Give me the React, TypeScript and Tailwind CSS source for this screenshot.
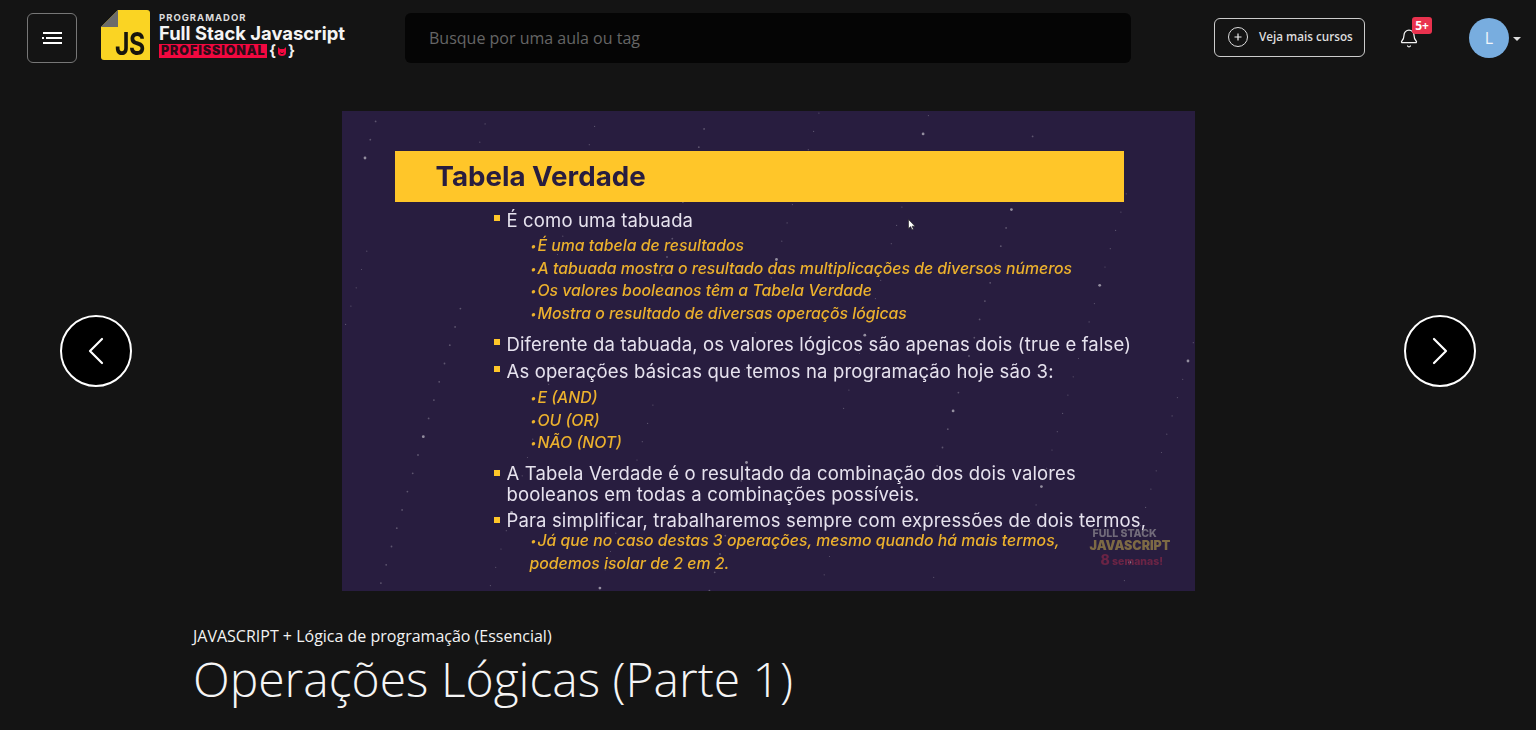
import { Bell, ChevronLeft, ChevronRight } from 'lucide-react';

// estrelas do fundo do slide (posições fixas, como no vídeo)
const stars = Array.from({ length: 170 }, (_, i) => ({
  x: (i * 379.7 + 23) % 853,
  y: (i * 211.3 + 47) % 480,
  r: i % 11 === 0 ? 1.4 : i % 3 === 0 ? 0.9 : 0.6,
  o: i % 11 === 0 ? 0.5 : 0.25,
}));

function Main({ children, className = '' }: { children: React.ReactNode; className?: string }) {
  return (
    <div className={`flex w-fit text-[18.5px] leading-[24px] tracking-[0.14px] text-[#e6e2ee] ${className}`}>
      <span className="mt-[7px] mr-[7px] h-[6px] w-[6px] shrink-0 bg-[#ffc629]" />
      <div>{children}</div>
    </div>
  );
}

function Sub({ children }: { children: React.ReactNode }) {
  return (
    <div className="ml-[37px] flex w-fit text-[15.8px] leading-[22.5px] font-medium whitespace-nowrap text-[#ecb12d] italic">
      <span className="w-[7px] text-[11px]">•</span>
      <span>{children}</span>
    </div>
  );
}

function Slide() {
  return (
    <div className="relative h-[480px] w-[853px] shrink-0 overflow-hidden bg-[#281d3f] font-['Inter',sans-serif]">
      <svg className="absolute inset-0" width="853" height="480">
        {stars.map((s, i) => (
          <circle key={i} cx={s.x} cy={s.y} r={s.r} fill="#ffffff" opacity={s.o} />
        ))}
      </svg>
      <div className="relative blur-[0.3px]">
        <div className="mt-[40px] ml-[53px] flex h-[51px] w-[729px] items-center bg-[#ffc629] pl-[41px] text-[27.7px] font-bold text-[#281d3f]">
          Tabela Verdade
        </div>
        <div className="ml-[152px]">
          <Main className="mt-[6px]">É como uma tabuada</Main>
          <div className="mt-[3px]">
            <Sub>É uma tabela de resultados</Sub>
            <Sub>A tabuada mostra o resultado das multiplicações de diversos números</Sub>
            <Sub>Os valores booleanos têm a Tabela Verdade</Sub>
            <Sub>Mostra o resultado de diversas operaçõs lógicas</Sub>
          </div>
          <Main className="mt-[7px]">Diferente da tabuada, os valores lógicos são apenas dois (true e false)</Main>
          <Main className="mt-[3px]">As operações básicas que temos na programação hoje são 3:</Main>
          <div className="mt-[4px]">
            <Sub>E (AND)</Sub>
            <Sub>OU (OR)</Sub>
            <Sub>NÃO (NOT)</Sub>
          </div>
          <Main className="mt-[8px] !leading-[21px]">
            A Tabela Verdade é o resultado da combinação dos dois valores
            <br />
            booleanos em todas a combinações possíveis.
          </Main>
          <Main className="mt-[5px] !leading-[20px]">Para simplificar, trabalharemos sempre com expressões de dois termos,</Main>
          <div className="mt-0">
            <Sub>Já que no caso destas 3 operações, mesmo quando há mais termos,</Sub>
            <div className="ml-[36px] w-fit text-[15.8px] leading-[23px] font-medium text-[#ecb12d] italic">
              podemos isolar de 2 em 2.
            </div>
          </div>
        </div>
      </div>
      {/* marca d'água */}
      <div className="absolute top-[418px] left-[748px] w-[82px] text-[#85808a] blur-[0.3px]">
        <div className="ml-[3px] text-[10.5px] leading-[9px] font-extrabold whitespace-nowrap opacity-80">FULL STACK</div>
        <div className="mt-[1px] text-[12.5px] leading-[13px] font-black whitespace-nowrap text-[#7d6a45]">JAVASCRIPT</div>
        <div className="mt-[1px] ml-[11px] text-[10.5px] leading-[13px] font-extrabold whitespace-nowrap text-[#6b2445]">
          <span className="text-[14px] leading-[13px]">8</span> semanas!
        </div>
      </div>
      {/* cursor do mouse */}
      <svg className="absolute top-[108px] left-[566px]" width="8" height="12" viewBox="0 0 8 12">
        <path d="M0.5 0.5V9.5L2.7 7.6L4 10.8L5.4 10.2L4.1 7.2H7Z" fill="#fff" stroke="#222" strokeWidth="0.6" />
      </svg>
    </div>
  );
}

function Logo() {
  return (
    <div className="mb-[6px] ml-[24px] flex h-[50px] items-center font-['Inter',sans-serif]">
      <div className="relative h-[50px] w-[49px]">
        <svg width="49" height="50" viewBox="0 0 49 50">
          <path d="M17 0H46a3 3 0 0 1 3 3V50H3a3 3 0 0 1-3-3V17Z" fill="#fad423" />
          <path d="M17 0V17H0Z" fill="#6b6b6b" />
        </svg>
        <span className="absolute top-[17px] left-[14px] origin-left scale-x-[0.8] text-[31px] leading-[34px] font-bold tracking-[-0.5px] text-[#17150d]">
          JS
        </span>
      </div>
      <div className="ml-[9px] flex flex-col">
        <span className="text-[9.5px] leading-[11px] font-bold tracking-[1px] text-[#dcdcdc]">PROGRAMADOR</span>
        <span className="text-[18.4px] leading-[21px] font-bold whitespace-nowrap text-[#f4f4f4]">Full Stack Javascript</span>
        <div className="flex items-center">
          <span className="h-[14px] w-[108px] bg-[#f2083f] pl-[2px] text-[12.5px] leading-[14px] font-black tracking-[0.9px] whitespace-nowrap text-[#2a0d18]">
            PROFISSIONAL
          </span>
          <span className="ml-[2px] flex items-center text-[15px] leading-[14px] font-bold text-[#f0f0f0]">
            {'{'}
            <svg width="10" height="11" viewBox="0 0 10 11" className="mx-[1px]">
              <path d="M1 1L3 3H7L9 1V7C9 9 7 10 5 10C3 10 1 9 1 7Z" fill="#f2083f" />
              <path d="M3 6.5C4 8 6 8 7 6.5" stroke="#2a0d18" fill="none" />
            </svg>
            {'}'}
          </span>
        </div>
      </div>
    </div>
  );
}

export default function App() {
  return (
    <div className="h-[730px] overflow-hidden bg-[#141414] font-['Open_Sans',sans-serif] text-white">
      <header className="flex h-[76px] items-center pr-[15px] pl-[27px]">
        <button className="flex h-[50px] w-[50px] items-center justify-center rounded-[6px] border border-[#777] bg-[#141414]">
          <svg width="22" height="14" viewBox="0 0 22 14" fill="none" stroke="#fff" strokeWidth="2">
            <path d="M2 2H21M1 7H3M5 7H21M2 12H21" />
          </svg>
        </button>
        <Logo />
        <div className="ml-[60px] flex h-[50px] w-[726px] items-center rounded-[6px] bg-[#050505] pl-[24px] text-[16px] text-[#666]">
          Busque por uma aula ou tag
        </div>
        <button className="mb-[2px] ml-[83px] flex h-[39px] w-[151px] items-center rounded-[6px] border border-[#ccc] pl-[13px] text-[11.7px] font-semibold text-[#ddd]">
          <span className="mr-[11px] flex h-[20px] w-[20px] items-center justify-center rounded-full border border-[#ddd]">
            <svg width="8" height="8" viewBox="0 0 8 8" stroke="#eee" strokeWidth="1.2">
              <path d="M4 0.5V7.5M0.5 4H7.5" />
            </svg>
          </span>
          Veja mais cursos
        </button>
        <div className="relative ml-[34px] flex h-[40px] w-[20px] items-center justify-center">
          <Bell size={21} strokeWidth={1.5} color="#f2f2f2" />
          <span className="absolute top-[-1px] left-[13px] flex h-[17px] w-[20px] items-center justify-center rounded-[3px] bg-[#e9324e] text-[12px] font-bold">
            5+
          </span>
        </div>
        <div className="ml-[50px] flex h-[40px] w-[40px] items-center justify-center rounded-full bg-[#78addf] text-[16px] text-[#f2f6fa]">
          L
        </div>
        <span className="mt-[2px] ml-[4px] h-0 w-0 border-x-[4px] border-t-[4px] border-x-transparent border-t-[#ddd]" />
      </header>

      <main>
        <div className="flex items-center justify-between px-[60px] pt-[35px]">
          <button className="flex h-[72px] w-[72px] items-center justify-center rounded-full border-2 border-white bg-black">
            <ChevronLeft size={48} strokeWidth={1.1} />
          </button>
          <Slide />
          <button className="flex h-[72px] w-[72px] items-center justify-center rounded-full border-2 border-white bg-black">
            <ChevronRight size={48} strokeWidth={1.1} />
          </button>
        </div>
        <div className="pt-[34px] pl-[193px]">
          <div className="text-[16px] leading-[22px] font-normal text-[#f2f2f2]">
            JAVASCRIPT + Lógica de programação (Essencial)
          </div>
          <h1 className="mt-[2px] text-[48px] leading-[60px] font-light text-[#f5f5f5]">Operações Lógicas (Parte 1)</h1>
          <div className="mt-[21px] flex gap-[13px] pl-[3px]">
            {[0, 1, 2, 3, 4].map((i) => (
              <span key={i} className="h-[10px] w-[10px] rounded-full bg-[#444]" />
            ))}
          </div>
        </div>
      </main>
    </div>
  );
}
